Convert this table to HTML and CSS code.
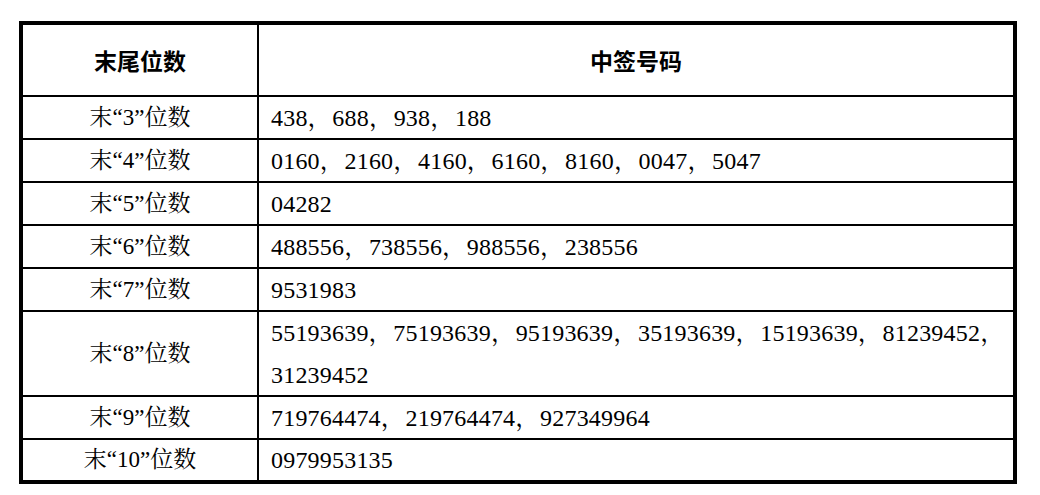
FILE: index.html
```html
<!DOCTYPE html>
<html lang="zh-CN">
<head>
<meta charset="utf-8">
<title>中签号码</title>
<link rel="stylesheet" href="styles.css">
</head>
<body>
<div class="table">
  <div class="cell head">末尾位数</div>
  <div class="cell head">中签号码</div>

  <div class="cell key">末“3”位数</div>
  <div class="cell val">438<span class="sep">，</span>688<span class="sep">，</span>938<span class="sep">，</span>188</div>

  <div class="cell key">末“4”位数</div>
  <div class="cell val">0160<span class="sep">，</span>2160<span class="sep">，</span>4160<span class="sep">，</span>6160<span class="sep">，</span>8160<span class="sep">，</span>0047<span class="sep">，</span>5047</div>

  <div class="cell key">末“5”位数</div>
  <div class="cell val">04282</div>

  <div class="cell key">末“6”位数</div>
  <div class="cell val">488556<span class="sep">，</span>738556<span class="sep">，</span>988556<span class="sep">，</span>238556</div>

  <div class="cell key">末“7”位数</div>
  <div class="cell val">9531983</div>

  <div class="cell key">末“8”位数</div>
  <div class="cell val"><p class="lines">55193639<span class="sep">，</span>75193639<span class="sep">，</span>95193639<span class="sep">，</span>35193639<span class="sep">，</span>15193639<span class="sep">，</span>81239452<span class="sep">，</span>31239452</p></div>

  <div class="cell key">末“9”位数</div>
  <div class="cell val">719764474<span class="sep">，</span>219764474<span class="sep">，</span>927349964</div>

  <div class="cell key">末“10”位数</div>
  <div class="cell val">0979953135</div>
</div>
</body>
</html>
```

FILE: styles.css
```css
html, body {
  margin: 0;
  background: #fff;
}

body {
  padding: 21px 0 0 19px;
  font-family: "Liberation Serif", "Noto Serif CJK SC", "Noto Sans CJK SC", serif;
  font-size: 24px;
  color: #000;
}

.table {
  display: grid;
  grid-template-columns: 234px 754px;
  grid-template-rows: 70px repeat(5, 41px) 83px 41px 40px;
  gap: 2px;
  width: 990px;
  border: 4px solid #000;
  background: #000;
}

.cell {
  background: #fff;
  display: flex;
  align-items: center;
  line-height: 42px;
  white-space: nowrap;
}

.head {
  justify-content: center;
  font-family: "Noto Sans CJK SC", sans-serif;
  font-size: 23px;
  font-weight: 700;
}

.key {
  justify-content: center;
  font-size: 23px;
}

.val {
  padding-left: 12px;
  letter-spacing: 0.2px;
}

.lines {
  margin: 0;
  white-space: normal;
  width: 740px;
}

.sep {
  margin-right: 0.5px;
}
```
